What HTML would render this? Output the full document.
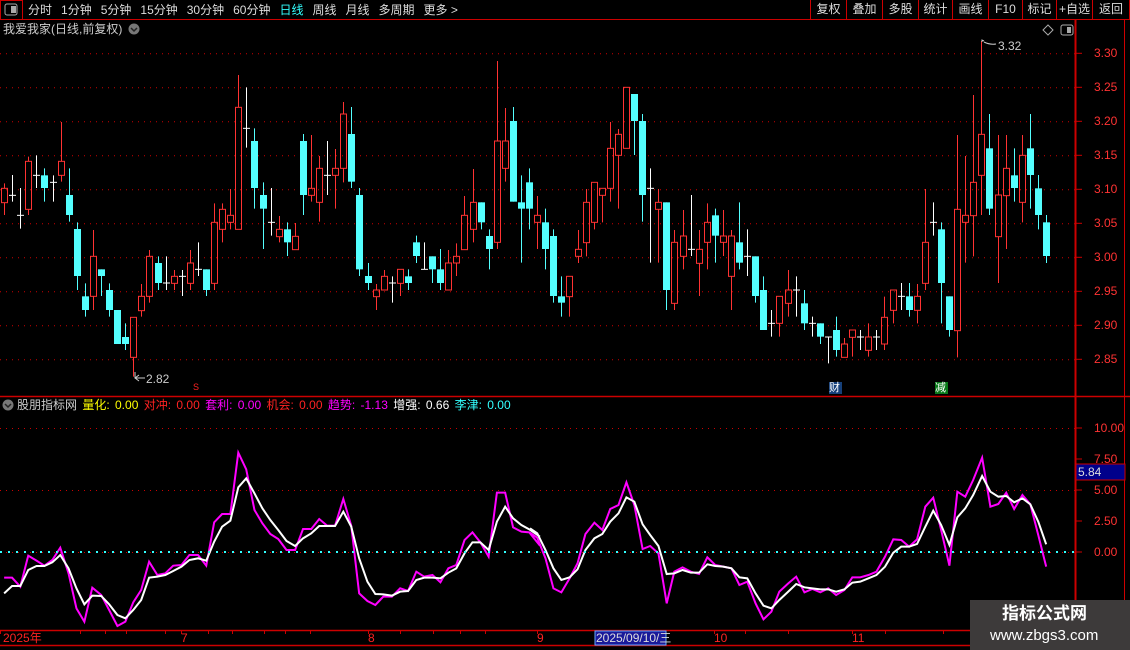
<!DOCTYPE html>
<html><head><meta charset="utf-8"><style>
*{margin:0;padding:0;box-sizing:border-box}
body{width:1130px;height:650px;background:#000;overflow:hidden;position:relative;font-family:"Liberation Sans","Noto Sans CJK SC",sans-serif;color:#ccc}
.t{position:absolute;white-space:nowrap;font-size:12px;line-height:14px}
#tb span{margin-right:9px}
.btn{position:absolute;top:0;height:19px;border-left:1px solid #c00;color:#ddd;font-size:12px;line-height:19px;text-align:center}
</style></head><body>
<svg id="s" width="1130" height="650" style="position:absolute;left:0;top:0">
<rect x="0.5" y="0.5" width="22" height="19" fill="none" stroke="#c00"/>
<rect x="5" y="4" width="12" height="11" rx="2" fill="none" stroke="#aaa"/>
<rect x="11" y="6" width="5" height="7" fill="#aaa"/>
<line x1="0" y1="19.5" x2="1130" y2="19.5" stroke="#c00"/>
<line x1="1075.5" y1="20" x2="1075.5" y2="645" stroke="#c00" stroke-width="2"/>
<line x1="1124.5" y1="20" x2="1124.5" y2="645" stroke="#c00"/>
<line x1="0" y1="396.5" x2="1130" y2="396.5" stroke="#c00" stroke-width="1.5"/>
<line x1="0" y1="630.5" x2="1130" y2="630.5" stroke="#c00" stroke-width="1.5"/>
<line x1="0" y1="645.5" x2="1130" y2="645.5" stroke="#c00" stroke-width="1.5"/>
<g id="grid" stroke="#c00" stroke-dasharray="1 5"></g>
<g id="cand"></g>
<g transform="translate(0,440) scale(0.34435,0.33333)" fill="none" stroke-width="2" vector-effect="non-scaling-stroke">
<polyline vector-effect="non-scaling-stroke" stroke="#ff00ff" stroke-width="2" points="12,413 35,413 59,440 82,347 106,362 129,377 152,360 175,323 199,400 222,505 245,545 268,443 294,465 317,510 341,558 364,545 387,487 410,450 433,365 457,405 480,400 503,377 527,375 550,345 575,345 599,377 622,247 645,222 669,222 692,38 715,88 739,210 762,250 785,282 808,297 832,330 857,330 880,267 904,267 927,237 950,257 973,257 997,177 1020,257 1043,460 1067,483 1090,495 1113,470 1138,470 1162,445 1185,453 1209,395 1232,410 1256,405 1279,427 1302,385 1325,375 1349,300 1372,277 1395,307 1419,350 1443,158 1467,158 1490,262 1514,275 1537,277 1568,317"/>
<polyline vector-effect="non-scaling-stroke" stroke="#fff" stroke-width="2" points="12,460 35,438 59,438 82,390 106,378 129,378 152,367 175,345 199,385 222,445 245,493 268,467 294,468 317,493 341,525 364,535 387,510 410,480 433,413 457,410 480,405 503,393 527,380 550,360 575,355 599,362 622,305 645,260 669,242 692,142 715,115 739,160 762,205 785,240 808,270 832,303 857,318 880,295 904,280 927,258 950,258 973,258 997,215 1020,260 1043,355 1067,425 1090,462 1113,463 1138,467 1162,455 1185,453 1209,420 1232,413 1256,413 1279,415 1302,398 1325,385 1349,340 1372,307 1395,307 1419,330 1443,245 1467,200 1490,235 1514,255 1537,268 1568,290"/>
</g>
<g transform="translate(530,440) scale(0.34435,0.33333)" fill="none">
<polyline vector-effect="non-scaling-stroke" stroke="#ff00ff" stroke-width="2" points="0,278 21,293 45,355 68,445 91,457 115,415 138,370 161,282 187,248 210,270 233,207 257,195 280,127 303,195 327,327 349,318 373,340 397,490 419,395 443,382 467,395 491,402 515,352 538,375 561,380 585,385 608,435 631,425 655,490 678,538 701,515 724,455 750,430 773,410 797,457 820,447 843,457 866,445 889,465 913,450 936,412 959,412 983,405 1006,395 1031,350 1055,298 1078,300 1101,320 1124,298 1148,200 1171,173 1194,270 1218,377 1241,155 1264,170 1287,120 1313,53 1337,200 1360,192 1383,158 1406,207 1430,165 1453,193 1476,285 1499,380"/>
<polyline vector-effect="non-scaling-stroke" stroke="#fff" stroke-width="2" points="0,265 21,280 45,330 68,385 91,420 115,412 138,388 161,330 187,295 210,282 233,245 257,220 280,172 303,185 327,253 349,285 373,318 397,402 419,400 443,390 467,398 491,398 515,373 538,378 561,380 585,385 608,412 631,415 655,460 678,497 701,505 724,480 750,455 773,432 797,442 820,445 843,448 866,448 889,455 913,448 936,428 959,425 983,415 1006,405 1031,380 1055,338 1078,320 1101,320 1124,312 1148,260 1171,212 1194,255 1218,315 1241,232 1264,205 1287,165 1313,108 1337,155 1360,170 1383,168 1406,187 1430,175 1453,193 1476,245 1499,313"/>
</g>
<line x1="0" y1="552" x2="1075" y2="552" stroke="#3ff" stroke-width="2" stroke-dasharray="2 6"/>
<path d="M135 372 V378 H145 M135 378 l4 -3 M135 378 l4 3" stroke="#ccc" fill="none"/>
<path d="M982 42 V40 L984 41 M984 42 q6 3 12 2" stroke="#ccc" fill="none"/>
<g id="axt" stroke="#c00"></g>
<rect x="1076" y="464" width="49" height="16" fill="#00008b" stroke="#c00"/>
<rect x="595" y="631" width="71" height="14" fill="#1a1a9a" stroke="#6af"/>
<rect x="829" y="382" width="13" height="12" fill="#16407a"/>
<rect x="935" y="382" width="13" height="12" fill="#0a7a1a"/>
<path d="M1043 30 l5 -5 l5 5 l-5 5z" fill="none" stroke="#aaa"/>
<rect x="1061" y="25" width="12" height="10" rx="2" fill="none" stroke="#aaa"/>
<rect x="1067" y="27" width="4" height="6" fill="#aaa"/>
<circle cx="8" cy="405" r="5.5" fill="#777"/><path d="M5 404 l3 3 l3 -3" stroke="#222" fill="none" stroke-width="1.5"/>
<circle cx="134" cy="29" r="5.5" fill="#777"/><path d="M131 28 l3 3 l3 -3" stroke="#222" fill="none" stroke-width="1.5"/>
<rect x="970" y="600" width="160" height="50" fill="#3d3a3a"/>
</svg>
<div class="t" id="tb" style="left:28px;top:3px;color:#ddd"><span>分时</span><span>1分钟</span><span>5分钟</span><span>15分钟</span><span>30分钟</span><span>60分钟</span><span style="color:#3ff">日线</span><span>周线</span><span>月线</span><span>多周期</span><span>更多 &gt;</span></div>
<div class="btn" style="left:810px;width:36px">复权</div>
<div class="btn" style="left:846px;width:36px">叠加</div>
<div class="btn" style="left:882px;width:36px">多股</div>
<div class="btn" style="left:918px;width:34px">统计</div>
<div class="btn" style="left:952px;width:36px">画线</div>
<div class="btn" style="left:988px;width:34px">F10</div>
<div class="btn" style="left:1022px;width:34px">标记</div>
<div class="btn" style="left:1056px;width:36px">+自选</div>
<div class="btn" style="left:1092px;width:38px;border-right:1px solid #c00">返回</div>
<div class="t" style="left:3px;top:22px;color:#ccc">我爱我家(日线,前复权)</div>
<div class="t" style="left:146px;top:372px;color:#ccc">2.82</div>
<div class="t" style="left:998px;top:39px;color:#ccc">3.32</div>
<div class="t" style="left:193px;top:382px;color:#f22;font-size:9px;line-height:10px">S</div>
<div class="t" style="left:829px;top:381px;color:#fff;font-size:11px">财</div>
<div class="t" style="left:935px;top:381px;color:#fff;font-size:11px">减</div>
<div class="t" style="left:17px;top:398px;color:#ccc;word-spacing:2px">股朋指标网 <span style="color:#ff0">量化: 0.00</span> <span style="color:#f22">对冲: 0.00</span> <span style="color:#f0f">套利: 0.00</span> <span style="color:#f22">机会: 0.00</span> <span style="color:#f0f">趋势: -1.13</span> <span style="color:#fff">增强: 0.66</span> <span style="color:#3ff">李津: 0.00</span></div>
<div id="lab"></div>
<div class="t" style="left:1078px;top:465px;color:#ddd">5.84</div>
<div class="t" style="left:3px;top:631px;color:#f22">2025年</div>
<div class="t" style="left:181px;top:631px;color:#f22">7</div>
<div class="t" style="left:368px;top:631px;color:#f22">8</div>
<div class="t" style="left:537px;top:631px;color:#f22">9</div>
<div class="t" style="left:596px;top:631px;color:#ddd">2025/09/10/三</div>
<div class="t" style="left:714px;top:631px;color:#f22">10</div>
<div class="t" style="left:852px;top:631px;color:#f22">11</div>
<div class="t" style="left:1002px;top:604px;color:#fff;font-size:17px;line-height:20px;font-weight:bold">指标公式网</div>
<div class="t" style="left:990px;top:627px;color:#fff;font-size:15px;line-height:18px">www.zbgs3.com</div>
<script>
var NS="http://www.w3.org/2000/svg";
function el(p,t,a){var e=document.createElementNS(NS,t);for(var k in a)e.setAttribute(k,a[k]);p.appendChild(e);return e}
var g=document.getElementById('grid'),ax=document.getElementById('axt'),lab=document.getElementById('lab');
var h='';
for(var i=0;i<10;i++){var p=3.30-i*0.05,y=53.3+i*34;
el(g,'line',{x1:0,y1:y+.5,x2:1075,y2:y+.5});el(ax,'line',{x1:1075,y1:y,x2:1082,y2:y});
h+='<div class="t" style="left:1094px;top:'+(y-7)+'px;color:#f33">'+p.toFixed(2)+'</div>';}
var iv=[[10,428],[7.5,459],[5,490],[2.5,521],[0,552]];
iv.forEach(function(v){if(v[0]%5==0)el(g,'line',{x1:0,y1:v[1]+.5,x2:1075,y2:v[1]+.5});el(ax,'line',{x1:1075,y1:v[1],x2:1082,y2:v[1]});
h+='<div class="t" style="left:1094px;top:'+(v[1]-7)+'px;color:#f33">'+v[0].toFixed(2)+'</div>';});
[0,80,105,126,165,181,208,232,264,285,310,368,400,433,460,485,537,595,664,714,745,788,852,885,943].forEach(function(x){el(ax,'line',{x1:x+.5,y1:631,x2:x+.5,y2:634})});
lab.innerHTML=h;
var C=[["r",385,428,370,465],["w",406,406,345,425],["w",466,466,384,506],["r",304,448,290,465],["w",346,346,286,384],["c",346,384,325,425],["w",367,367,346,425],["r",304,346,186,365],["c",405,465,325,485],["c",507,648,487,690],["c",709,750,670,770],["r",589,709,510,750],["c",628,648,628,708],["c",690,750,670,770],["c",750,852,750,852],["c",831,852,790,870],["r",772,892,772,950],["r",709,752,672,770],["r",589,709,570,728],["c",609,669,589,690],["w",669,669,589,690],["r",649,670,630,690],["w",649,649,630,708],["r",609,670,570,690],["w",628,628,547,648],["c",628,690,628,708],["r",487,670,430,690],["r",448,508,430,547],["r",466,487,387,508],["r",142,508,45,508],["w",205,205,82,263],["c",243,384,205,446],["c",405,446,367,567],["w",487,487,384,527],["r",508,530,468,547],["c",508,547,487,588],["r",529,569,489,569],["c",243,405,222,465],["r",385,406,225,425],["r",325,427,288,485],["w",346,346,243,405],["r",325,346,267,446],["r",162,325,126,367],["c",222,365,141,384],["c",405,628,384,648],["c",648,669,609,690],["r",690,710,672,750],["r",649,690,630,690],["w",669,669,649,728],["r",628,670,628,708],["c",649,669,628,690],["c",547,588,527,609],["w",628,628,547,628],["c",589,628,589,669],["c",628,669,567,690],["r",609,690,570,690],["r",589,609,550,648],["r",466,569,408,569],["r",427,508,327,547],["c",427,487,427,508],["c",528,567,508,628],["r",243,547,3,567],["r",243,325,144,365],["c",183,425,141,425],["c",427,446,346,608],["c",367,446,325,508],
["r",466,487,408,567],["c",487,567,446,628],["c",528,708,508,728],["c",709,728,649,770],["r",649,710,649,770],["r",568,589,510,609],["r",427,548,387,589],["r",367,487,367,508],["r",385,406,385,487],["r",265,385,186,425],["r",223,286,207,446],["r",82,265,82,265],["c",102,183,102,285],["c",183,405,162,485],["w",385,385,325,608],["r",427,448,387,608],["c",427,690,427,750],["r",547,730,510,750],["r",528,589,450,628],["w",568,568,405,588],["r",568,610,510,708],["r",487,547,430,628],["c",466,527,446,608],["r",528,547,450,588],["r",528,649,510,750],["c",547,608,427,628],["w",589,589,508,648],["c",589,708,589,728],["c",690,810,649,810],["w",790,790,750,830],["r",709,790,709,830],["r",690,730,630,770],["w",690,690,649,770],["c",730,790,690,810],["w",790,790,770,830],["c",790,830,790,852],["w",831,831,831,910],["c",810,870,770,890],["r",852,892,834,892],["r",810,832,810,890],["w",831,831,810,870],["r",831,871,790,890],["w",831,831,810,870],["r",772,852,710,870],["r",690,751,690,790],["w",709,709,669,750],["c",709,750,669,770],["r",709,751,672,790],["r",547,670,387,690],["w",487,487,427,527],["c",508,669,487,790],["c",709,810,709,830],["r",448,812,225,892],["r",466,487,288,608],["r",367,467,105,589],["r",223,346,-57,465],["c",265,446,162,465],["r",405,530,225,669],["r",325,407,225,567],["c",346,384,265,425],["r",286,427,225,487],["c",265,345,162,446],["c",385,465,345,508],["c",487,588,465,609]];
var cg=document.getElementById('cand');
C.forEach(function(c,i){var x=Math.round(4.1+i*8.077)+.5;var yy=function(z){return 60+z/3};
var t=yy(c[1]),b=yy(c[2]),hi=yy(c[3]),lo=yy(c[4]);
if(c[0]=='r'){el(cg,'line',{x1:x,y1:hi,x2:x,y2:t,stroke:'#ff3232'});el(cg,'line',{x1:x,y1:b,x2:x,y2:lo,stroke:'#ff3232'});el(cg,'rect',{x:x-3,y:t,width:6,height:Math.max(b-t,1),fill:'none',stroke:'#ff3232'});}
else if(c[0]=='c'){el(cg,'line',{x1:x,y1:hi,x2:x,y2:lo,stroke:'#54ffff'});el(cg,'rect',{x:x-3.5,y:t,width:7,height:Math.max(b-t,2),fill:'#54ffff'});}
else{el(cg,'line',{x1:x,y1:hi,x2:x,y2:lo,stroke:'#fff'});el(cg,'line',{x1:x-3.5,y1:t,x2:x+3.5,y2:t,stroke:'#fff'});}});
</script>
</body></html>
